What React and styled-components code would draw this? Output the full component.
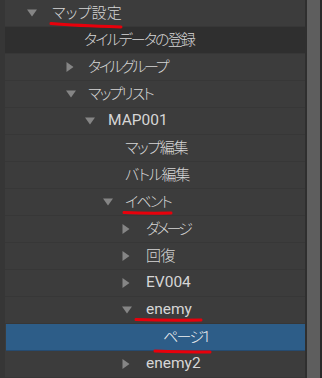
import React, { useLayoutEffect, useRef, useState } from 'react'
import styled, { createGlobalStyle } from 'styled-components'

const GlobalStyle = createGlobalStyle`
    html, body {
        margin: 0;
        padding: 0;
        background: #3c3c3c;
    }
    body {
        font-family: Roboto, "Noto Sans CJK JP", sans-serif;
    }
`

const Panel = styled.div`
    display: flex;
    width: 322px;
    height: 378px;
    overflow: hidden;
    background: #3c3c3c;
`

const LeftStrip = styled.div`
    width: 5px;
    flex-shrink: 0;
    background: #363636;
`

const Tree = styled.div`
    position: relative;
    flex: 1;
    display: flex;
    flex-direction: column;
`

const Gap = styled.div`
    width: 2px;
    flex-shrink: 0;
    background: #2f2f2f;
`

const Scrollbar = styled.div`
    width: 13px;
    flex-shrink: 0;
    background: #5e5e5e;
`

const Edge = styled.div`
    width: 2px;
    flex-shrink: 0;
    background: #2a2a2a;
`

const Row = styled.div`
    display: flex;
    align-items: center;
    height: 26px;
    flex-shrink: 0;
    padding-left: ${p => p.indent}px;
    border-bottom: 1px solid ${p => (p.selected ? '#264b70' : '#373737')};
    background: ${p => (p.selected ? '#2d5d88' : p.dark ? '#2f2f2f' : '#3c3c3c')};
    margin-left: ${p => (p.selected ? '1px' : '0')};
`

const Arrow = styled.span`
    width: ${p => p.width}px;
    flex-shrink: 0;
    display: flex;
    align-items: center;
`

const Label = styled.span`
    color: ${p => (p.selected ? '#f0f0f0' : '#d6d6d6')};
    font-family: Roboto, "Noto Sans CJK JP", sans-serif;
    font-size: ${p => (p.latin ? 15.5 : 15)}px;
    font-weight: ${p => (p.latin ? 400 : 300)};
    font-feature-settings: "palt" 1;
    white-space: nowrap;
    line-height: 1;
`

const Mark = styled.svg`
    position: absolute;
    left: 0;
    top: 0;
    pointer-events: none;
`

const Triangle = ({ open }) =>
    open ? (
        <svg width="10" height="8" viewBox="0 0 10 8">
            <polygon points="0,0.5 10,0.5 5,7.5" fill="#858585" />
        </svg>
    ) : (
        <svg width="8" height="10" viewBox="0 0 8 10">
            <polygon points="0.5,0 7.5,5 0.5,10" fill="#858585" />
        </svg>
    )

// squeezes kana text to the proportional width it has in the real panel
const FitLabel = ({ text, target, ...rest }) => {
    const ref = useRef(null)
    const [spacing, setSpacing] = useState(0)
    useLayoutEffect(() => {
        if (!target || !ref.current) return
        const natural = ref.current.getBoundingClientRect().width
        const n = [...text].length
        setSpacing((target - natural) / n)
    }, [text, target])
    return (
        <Label ref={ref} style={{ letterSpacing: `${spacing}px` }} {...rest}>
            {text}
        </Label>
    )
}

// x is the page position of the arrow (or of the text for leaves), gap is arrow-to-text
const items = [
    { label: 'マップ設定', x: 27, gap: 25, open: true, w: 70 },
    { label: 'タイルデータの登録', x: 84, dark: true, w: 110 },
    { label: 'タイルグループ', x: 66, gap: 22, open: false, w: 79 },
    { label: 'マップリスト', x: 66, gap: 22, open: true, w: 65 },
    { label: 'MAP001', x: 85, gap: 23, open: true, latin: true },
    { label: 'マップ編集', x: 125, w: 62 },
    { label: 'バトル編集', x: 125, w: 64 },
    { label: 'イベント', x: 103, gap: 22, open: true, w: 46 },
    { label: 'ダメージ', x: 122, gap: 24, open: false, w: 44 },
    { label: '回復', x: 122, gap: 24, open: false, w: 29 },
    { label: 'EV004', x: 122, gap: 24, open: false, latin: true },
    { label: 'enemy', x: 122, gap: 24, open: true, latin: true },
    { label: 'ページ1', x: 163, selected: true, w: 46 },
    { label: 'enemy2', x: 122, gap: 24, open: false, latin: true },
]

const App = () => {
    return (
        <>
            <GlobalStyle />
            <Panel>
                <LeftStrip />
                <Tree>
                    {items.map((it, i) => {
                        const leaf = it.open === undefined
                        return (
                            <Row
                                key={i}
                                indent={it.x - (it.selected ? 6 : 5)}
                                dark={it.dark}
                                selected={it.selected}
                            >
                                {!leaf && (
                                    <Arrow width={it.gap}>
                                        <Triangle open={it.open} />
                                    </Arrow>
                                )}
                                <FitLabel
                                    text={it.label}
                                    target={it.w}
                                    latin={it.latin}
                                    selected={it.selected}
                                />
                            </Row>
                        )
                    })}
                    <Mark width="300" height="378">
                        <g stroke="#e8000b" strokeWidth="3" strokeLinecap="round" fill="none">
                            <path d="M46 23.5 Q 70 25.5 116 27" />
                            <path d="M119 212.5 Q 140 213.5 166 213" />
                            <path d="M131 319.5 Q 160 320.5 196 320" />
                            <path d="M150 351 Q 175 352 205 352" />
                        </g>
                    </Mark>
                </Tree>
                <Gap />
                <Scrollbar />
                <Edge />
            </Panel>
        </>
    )
}

export default App
